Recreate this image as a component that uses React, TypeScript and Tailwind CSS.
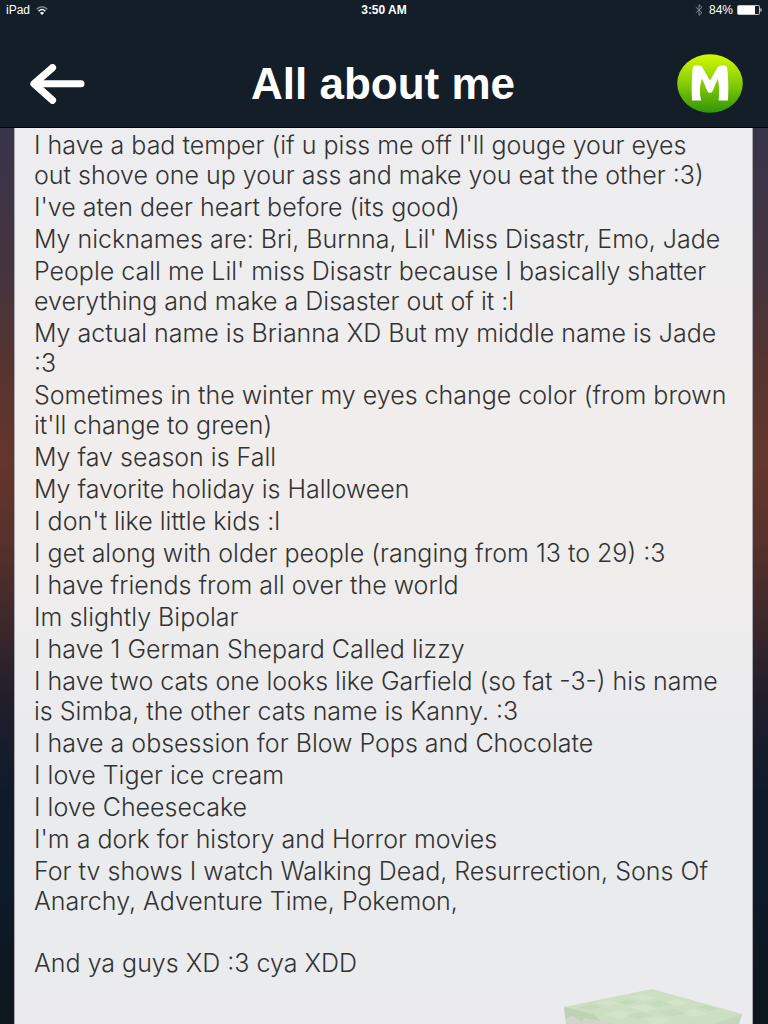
const paragraphs: string[] = [
  "I have a bad temper (if u piss me off I'll gouge your eyes\nout shove one up your ass and make you eat the other :3)",
  "I've aten deer heart before (its good)",
  "My nicknames are: Bri, Burnna, Lil' Miss Disastr, Emo, Jade",
  "People call me Lil' miss Disastr because I basically shatter\neverything and make a Disaster out of it :l",
  "My actual name is Brianna XD But my middle name is Jade\n:3",
  "Sometimes in the winter my eyes change color (from brown\nit'll change to green)",
  "My fav season is Fall",
  "My favorite holiday is Halloween",
  "I don't like little kids :l",
  "I get along with older people (ranging from 13 to 29) :3",
  "I have friends from all over the world",
  "Im slightly Bipolar",
  "I have 1 German Shepard Called lizzy",
  "I have two cats one looks like Garfield (so fat -3-) his name\nis Simba, the other cats name is Kanny. :3",
  "I have a obsession for Blow Pops and Chocolate",
  "I love Tiger ice cream",
  "I love Cheesecake",
  "I'm a dork for history and Horror movies",
  "For tv shows I watch Walking Dead, Resurrection, Sons Of\nAnarchy, Adventure Time, Pokemon,\n\u00a0",
  "And ya guys XD :3 cya XDD",
];

function StatusBar() {
  return (
    <div className="grid h-5 grid-cols-3 items-center px-[6px] text-[12px] leading-5">
      <div className="flex items-center gap-[6px]">
        <span>iPad</span>
        <svg viewBox="0 0 12 9" className="h-[9px] w-3" fill="none" aria-label="Wi-Fi">
          <path d="M0.8 3.2C3.8 0.2 8.2 0.2 11.2 3.2" stroke="#8a9299" strokeWidth="1.3" />
          <path d="M2.6 5.2C4.6 3.3 7.4 3.3 9.4 5.2" stroke="#fff" strokeWidth="1.5" />
          <path d="M6 9L3.9 6.8C5.1 5.8 6.9 5.8 8.1 6.8Z" fill="#fff" />
        </svg>
      </div>
      <span className="text-center font-bold">3:50 AM</span>
      <div className="flex items-center justify-end gap-1">
        <svg viewBox="0 0 8 12" className="mr-[2px] h-3 w-2" fill="none" stroke="#7d858c" aria-label="Bluetooth">
          <path d="M0.8 3.2L7 8.7L4 11.3V0.7L7 3.3L0.8 8.8" />
        </svg>
        <span>84%</span>
        <svg viewBox="0 0 25 10" className="h-[10px] w-[25px]" aria-label="Battery">
          <rect x="0.5" y="0.5" width="22" height="9" rx="1" fill="none" stroke="#c4c8cb" />
          <rect x="1" y="1" width="17" height="8" fill="#fff" />
          <path d="M23.5 3C25 3.5 25 6.5 23.5 7Z" fill="#fff" />
        </svg>
      </div>
    </div>
  );
}

function GrassBlock() {
  return (
    <svg viewBox="0 0 178 35" className="absolute right-[10px] bottom-0 h-[35px] w-[178px]" aria-hidden="true">
      <path d="M0 18L88 0L178 25L175 35H2Z" fill="#ccdfc3" />
      <path d="M0 18L50 35H2Z" fill="#d2d5ca" />
      <path d="M0 18L30 25L36 32L20 29L18 33L8 27L2 30Z" fill="#c0d2b6" />
      <path d="M178 25L150 35H175Z" fill="#c4d5bb" />
      <g fill="#d3e4ca">
        <path d="M32 14L46 11L56 14L42 17Z" />
        <path d="M66 8L78 5L92 9L80 12Z" />
        <path d="M66 18L80 15L94 20L80 23Z" />
        <path d="M100 13L112 10L124 14L112 17Z" />
        <path d="M40 25L56 21L70 26L54 30Z" />
        <path d="M116 23L130 20L144 25L130 28Z" />
        <path d="M82 30L96 27L108 31L98 35H90Z" />
      </g>
      <g fill="#c5dabb">
        <path d="M14 18L28 15L38 18L24 21Z" />
        <path d="M52 13L64 10L74 13L62 16Z" />
        <path d="M84 14L96 11L106 15L94 18Z" />
        <path d="M96 23L110 20L122 24L108 27Z" />
        <path d="M62 26L76 23L88 27L74 30Z" />
        <path d="M132 18L142 16L156 20L146 22Z" />
      </g>
    </svg>
  );
}

export default function App() {
  return (
    <div className="flex min-h-screen flex-col bg-[#0e1a25] font-['Liberation_Sans',Arial,sans-serif]">
      <header className="border-b border-black bg-[#131e29] text-white">
        <StatusBar />
        <div className="flex h-[107px] items-center justify-between pr-[25px] pb-[1px] pl-[30px]">
          <div className="flex w-[59px] pt-[22px]">
            <button type="button" aria-label="Back">
              <svg viewBox="0 0 55 40" className="h-10 w-[55px]" fill="none" stroke="#fff" strokeLinecap="round" strokeLinejoin="round">
                <path d="M22.500 3.700L4 19.800L22.500 36.300" strokeWidth="7.200" />
                <path d="M5 19.800H51" strokeWidth="7" />
              </svg>
            </button>
          </div>
          <h1 className="pt-[22px] text-[44px] leading-[52px] font-bold">All about me</h1>
          <button type="button" aria-label="Menu" className="pt-5">
            <svg viewBox="0 0 66 59" className="h-[59px] w-[66px]">
              <defs>
                <linearGradient id="lime" x1="0" y1="0" x2="0" y2="1">
                  <stop offset="0" stopColor="#d2fa00" />
                  <stop offset="0.5" stopColor="#86cc05" />
                  <stop offset="1" stopColor="#2f950b" />
                </linearGradient>
              </defs>
              <ellipse cx="33" cy="29.500" rx="32.800" ry="29.300" fill="url(#lime)" />
              <path
                d="M15 46.500C14.400 35 14.700 24 15.600 14.500C16 11.500 18 11.400 21 11.600C23.700 11.600 25 12.500 26 14.500L33 26.500L40 14.500C41 12.500 42.500 11.600 45 11.600C48 11.400 50 11.500 50.300 14.500C51.400 24 51.600 35 51 46.500H41.500C42.700 39 42.500 31.500 40.700 24.500C39.500 28 37.500 33 35.500 37.200C34.500 39.300 31.500 39.300 30.500 37.200C28.500 33 26.500 28 25 24.500C22.500 31.500 22.200 39 24.200 46.500Z"
                fill="#fff"
              />
            </svg>
          </button>
        </div>
      </header>
      <main className="flex flex-1 bg-[linear-gradient(to_bottom,#38344a_0%,#46343e_17%,#57342f_27%,#64362c_37%,#58312a_46%,#40292a_54%,#201e2a_64%,#101b2a_74%,#0d1a27_86%,#0f161c_100%)] pr-[15px] pl-[14px]">
        <article className="relative flex flex-1 flex-col gap-[2px] border-x border-[#a9a8ae] bg-[linear-gradient(to_bottom,#ededf0_0%,#efedee_20%,#f1edec_37%,#efedec_50%,#eaebee_70%,#ebebed_100%)] px-[19px] pt-[2px] pb-10 font-[Inter,sans-serif] text-[25px] leading-[30px] font-light text-[#333]">
          <GrassBlock />
          {paragraphs.map((text) => (
            <p key={text} className="whitespace-pre-line">
              {text}
            </p>
          ))}
        </article>
      </main>
    </div>
  );
}
